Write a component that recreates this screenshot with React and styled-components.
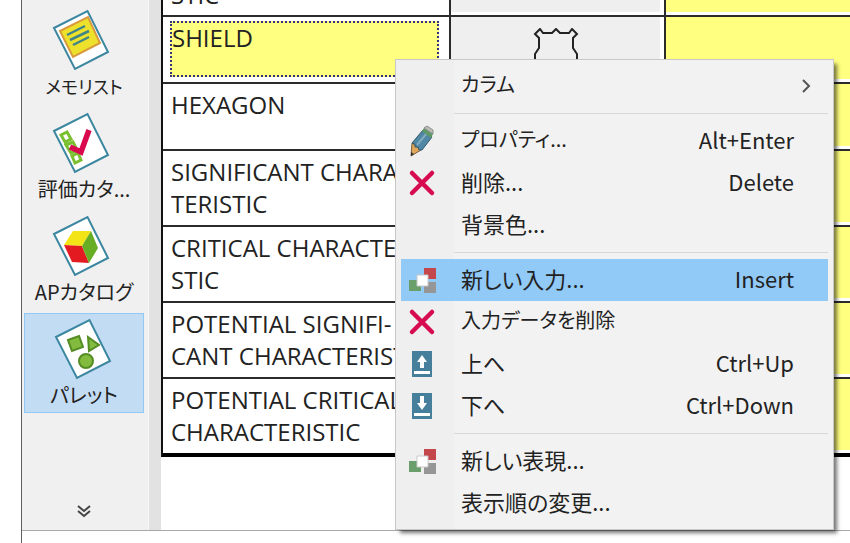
import React, { useState } from "react";
import styled, { createGlobalStyle } from "styled-components";

const GlobalStyle = createGlobalStyle`
  * {
    box-sizing: border-box;
  }
  body {
    margin: 0;
    background: #ffffff;
    color: #222222;
    font-family: "Noto Sans CJK JP", sans-serif;
    font-size: 22px;
    font-feature-settings: "palt";
  }
  button {
    font: inherit;
    color: inherit;
    font-feature-settings: inherit;
    border: none;
    background: none;
    padding: 0;
  }
`;

const Page = styled.div`
  position: relative;
  height: 100vh;
  padding-left: 21px;
  overflow: hidden;
`;

const Frame = styled.div`
  display: flex;
  flex-direction: column;
  height: 100%;
  border-left: 1px solid #606060;
`;

const Body = styled.div`
  display: flex;
  flex: 1;
  min-height: 0;
`;

const StatusStrip = styled.footer`
  height: 13px;
  border-top: 1px solid #a8a8a8;
`;

const Sidebar = styled.nav`
  display: flex;
  flex-direction: column;
  gap: 3px;
  width: 127px;
  padding: 4px 4px 12px 2px;
  background: #f0f0f0;
  border-right: 1px solid #f8f8f8;
`;

const SidebarItem = styled.button`
  display: flex;
  flex-direction: column;
  align-items: center;
  height: 100px;
  padding-top: 4px;
  white-space: nowrap;
  line-height: 30px;
  background: ${(props) => (props.$active ? "#c2dcf3" : "transparent")};
  border: 1px solid ${(props) => (props.$active ? "#90c8f6" : "transparent")};
`;

const SidebarIcon = styled.span`
  display: flex;
  padding-right: ${(props) => (props.$active ? "2px" : "6px")};
`;

const SidebarLabel = styled.span`
  font-size: ${(props) => (props.$small ? "18px" : "20px")};
`;

const MoreButton = styled.button`
  display: flex;
  justify-content: center;
  margin-top: auto;
`;

const Splitter = styled.div`
  width: 12px;
  background: #e2e2e2;
`;

const Pane = styled.main`
  flex: 1;
  min-width: 0;
  overflow: hidden;
`;

const Table = styled.table`
  width: 100%;
  table-layout: fixed;
  border-collapse: separate;
  border-spacing: 0;
  border-left: 2px solid #111111;
  border-bottom: 2px solid #000000;
  font-family: "Open Sans", "Noto Sans", sans-serif;
  font-size: 24px;
`;

const NameCol = styled.col`
  width: 288px;
`;

const SymbolCol = styled.col`
  width: 215px;
`;

const Cell = styled.td`
  height: ${(props) => props.$height}px;
  padding: 0;
  vertical-align: top;
  border-bottom: 2px solid #2b2b2b;
  border-right: 2px solid #2b2b2b;
  &:last-child {
    border-right: none;
  }
  tr:last-child > & {
    border-bottom-color: #000000;
  }
`;

const NameText = styled.div`
  margin: 4px 0 4px 7px;
  border: 1px solid transparent;
  line-height: 32px;
  white-space: pre;
  overflow: hidden;
`;

const ClippedText = styled.div`
  display: flex;
  align-items: flex-end;
  height: 15px;
  padding: 0 8px 4px;
  line-height: 32px;
`;

const SelectedText = styled(NameText)`
  height: 56px;
  margin-right: 10px;
  background: #ffff80;
  border: 2px dotted #34347c;
  line-height: 30px;
`;

const Fill = styled.div`
  display: flex;
  justify-content: center;
  height: ${(props) => props.$height - 5}px;
  margin-bottom: 3px;
  margin-right: ${(props) => (props.$yellow ? "0" : "4px")};
  padding-top: 11px;
  overflow: hidden;
  background: ${(props) => (props.$yellow ? "#ffff80" : "#efefef")};
`;

const Menu = styled.div`
  position: absolute;
  left: 395px;
  top: 59px;
  width: 439px;
  padding: 5px;
  border: 1px solid #c8c8c8;
  background: linear-gradient(to right, #efefef 58px, #f2f2f2 58px);
  box-shadow: 4px 4px 4px -1px rgba(0, 0, 0, 0.55);
`;

const MenuItem = styled.button`
  display: grid;
  grid-template-columns: 42px 1fr auto;
  align-items: center;
  column-gap: 18px;
  width: 100%;
  height: 42px;
  padding-right: 16px;
  text-align: left;
  line-height: 32px;
  background: ${(props) => (props.$active ? "#91c9f7" : "transparent")};
`;

const MenuIcon = styled.span`
  display: flex;
  justify-content: center;
`;

const MenuLabel = styled.span`
  padding-bottom: 4px;
  white-space: nowrap;
  font-size: ${(props) => (props.$small ? "20px" : "22px")};
`;

const Shortcut = styled.span`
  padding: 0 18px 4px 0;
`;

const Submenu = styled.span`
  display: flex;
`;

const Separator = styled.hr`
  height: 1px;
  margin: 6px 0 6px 53px;
  border: none;
  background: #d7d7d7;
`;

const Sheet = ({ children }) => (
  <svg width="58" height="62" viewBox="0 0 58 62">
    <path d="M2 19 35.500 2 56 43 23 60Z" fill="#fff" stroke="#3c87a0" strokeWidth="2" />
    {children}
  </svg>
);

const MemoIcon = () => (
  <Sheet>
    <path d="M8 22 36 8 48 34 21 48Z" fill="#eee12c" stroke="#d9993d" strokeWidth="2" />
    <path d="M15 26 33 17M18 31 37 22M21 36 37 28" stroke="#3f8587" strokeWidth="2.500" />
  </Sheet>
);

const RatingIcon = () => (
  <Sheet>
    <path
      d="M9 23 15 20 19 27 13 30ZM14 33 21 30 25 38 19 41ZM20 44 26 41 29 48 23 51Z"
      fill="#fff"
      stroke="#7abf2f"
      strokeWidth="3"
    />
    <path d="M18 35 29 40 37 18" fill="none" stroke="#d8094f" strokeWidth="5.500" />
  </Sheet>
);

const CubeIcon = () => (
  <Sheet>
    <path d="M12 30 21 16 39 16 30 31Z" fill="#f3e417" />
    <path d="M12 30 30 31 37 48 20 47Z" fill="#e31b21" />
    <path d="M39 16 46 33 37 48 30 31Z" fill="#67ae24" />
  </Sheet>
);

const PaletteIcon = () => (
  <Sheet>
    <g fill="#82bb3d" stroke="#558d25" strokeWidth="2">
      <path d="M14 22 25 18 29 29 18 33Z" />
      <path d="M34 19 45 27 35 33Z" />
      <circle cx="32" cy="43" r="7" />
    </g>
  </Sheet>
);

const PencilIcon = () => (
  <svg width="26" height="32" viewBox="0 0 26 32">
    <path d="M3 18 12 25 2 31Z" fill="#dfa65a" stroke="#76603d" strokeWidth="1" />
    <path d="M2 31 2 27 5 29Z" fill="#333" />
    <path d="M3 18 14 5 23 12 13 25 10 25 9 22 6 22 6 19Z" fill="#4f87a5" stroke="#35596c" />
    <path d="M8 20 18 8" stroke="#82abc0" strokeWidth="2" />
    <path d="M13 6 15 3 24 9 22 13Z" fill="#5d9865" />
    <path d="M15 3 18 1 24 5 24 9Z" fill="#bcbdb8" stroke="#8b8e88" />
  </svg>
);

const DeleteIcon = () => (
  <svg width="28" height="28" viewBox="0 0 28 28">
    <path
      d="M4 4 24 24M24 4 4 24"
      stroke="#d60b50"
      strokeWidth="4.500"
      strokeLinecap="round"
    />
  </svg>
);

const NewIcon = () => (
  <svg width="28" height="28" viewBox="0 0 28 28">
    <path d="M16 2H28V13H16Z" fill="#c4484b" />
    <path d="M1 14H13V25H1Z" fill="#6a9e6b" />
    <path d="M16 16H28V27H16Z" fill="#969696" />
    <path d="M9 9H20V20H9Z" fill="#fff" stroke="#c9c9c9" strokeWidth="1" />
  </svg>
);

const MoveIcon = ({ down }) => (
  <svg width="20" height="26" viewBox="0 0 20 26">
    <path d="M0 0H20V26H0Z" fill="#467f9c" />
    <path
      d={down ? "M8 3H12V10H15L10 17 5 10H8Z" : "M10 4 15 11H12V17H8V11H5Z"}
      fill="#fff"
    />
    <path d="M2 20H18V23H2Z" fill="#fff" />
  </svg>
);

const ChevronIcon = () => (
  <svg width="10" height="16" viewBox="0 0 10 16">
    <path d="M1 2 7 8 1 14" fill="none" stroke="#555" strokeWidth="2" />
  </svg>
);

const MoreIcon = () => (
  <svg width="16" height="14" viewBox="0 0 16 14">
    <path d="M2 2 8 7 14 2M2 7 8 12 14 7" fill="none" stroke="#444" strokeWidth="2" />
  </svg>
);

const ShieldShape = () => (
  <svg width="46" height="46" viewBox="0 0 46 46">
    <path
      d="M2 6 7 1 10 5H19L23 1 27 5H36L39 1 44 6 40 10V20L44 26V32Q42 41 23 45 4 41 2 32V26L6 20V10Z"
      fill="none"
      stroke="#222"
      strokeWidth="2"
    />
  </svg>
);

const sidebarItems = [
  { label: "メモリスト", icon: <MemoIcon />, small: true },
  { label: "評価カタ...", icon: <RatingIcon /> },
  { label: "APカタログ", icon: <CubeIcon /> },
  { label: "パレット", icon: <PaletteIcon /> },
];

const rows = [
  { text: "STIC", height: 17, clipped: true },
  { text: "SHIELD", height: 67, selected: true, symbol: <ShieldShape /> },
  { text: "HEXAGON", height: 67 },
  { text: "SIGNIFICANT CHARAC-\nTERISTIC", height: 76 },
  { text: "CRITICAL CHARACTERI-\nSTIC", height: 76 },
  { text: "POTENTIAL SIGNIFI-\nCANT CHARACTERISTIC", height: 76 },
  { text: "POTENTIAL CRITICAL\nCHARACTERISTIC", height: 76 },
];

const menuGroups = [
  [{ label: "カラム", submenu: true, small: true }],
  [
    { label: "プロパティ...", shortcut: "Alt+Enter", icon: <PencilIcon />, small: true },
    { label: "削除...", shortcut: "Delete", icon: <DeleteIcon /> },
    { label: "背景色..." },
  ],
  [
    { label: "新しい入力...", shortcut: "Insert", icon: <NewIcon /> },
    { label: "入力データを削除", icon: <DeleteIcon />, small: true },
    { label: "上へ", shortcut: "Ctrl+Up", icon: <MoveIcon /> },
    { label: "下へ", shortcut: "Ctrl+Down", icon: <MoveIcon down /> },
  ],
  [{ label: "新しい表現...", icon: <NewIcon /> }, { label: "表示順の変更..." }],
];

const NameCell = ({ row }) => {
  if (row.clipped) return <ClippedText>{row.text}</ClippedText>;
  if (row.selected) return <SelectedText>{row.text}</SelectedText>;
  return <NameText>{row.text}</NameText>;
};

const ContextMenu = () => {
  const [active, setActive] = useState("新しい入力...");
  return (
    <Menu role="menu">
      {menuGroups.map((group, index) => (
        <React.Fragment key={index}>
          {index > 0 && <Separator />}
          {group.map((item) => (
            <MenuItem
              key={item.label}
              role="menuitem"
              $active={active === item.label}
              onMouseEnter={() => setActive(item.label)}
            >
              <MenuIcon>{item.icon}</MenuIcon>
              <MenuLabel $small={item.small}>{item.label}</MenuLabel>
              {item.shortcut && <Shortcut>{item.shortcut}</Shortcut>}
              {item.submenu && (
                <Submenu>
                  <ChevronIcon />
                </Submenu>
              )}
            </MenuItem>
          ))}
        </React.Fragment>
      ))}
    </Menu>
  );
};

const App = () => {
  const [view, setView] = useState("パレット");
  return (
    <Page>
      <GlobalStyle />
      <Frame>
        <Body>
          <Sidebar>
            {sidebarItems.map((item) => (
              <SidebarItem
                key={item.label}
                $active={view === item.label}
                onClick={() => setView(item.label)}
              >
                <SidebarIcon $active={view === item.label}>{item.icon}</SidebarIcon>
                <SidebarLabel $small={item.small}>{item.label}</SidebarLabel>
              </SidebarItem>
            ))}
            <MoreButton aria-label="More">
              <MoreIcon />
            </MoreButton>
          </Sidebar>
          <Splitter />
          <Pane>
            <Table>
              <colgroup>
                <NameCol />
                <SymbolCol />
                <col />
              </colgroup>
              <tbody>
                {rows.map((row) => (
                  <tr key={row.text}>
                    <Cell $height={row.height}>
                      <NameCell row={row} />
                    </Cell>
                    <Cell $height={row.height}>
                      <Fill $height={row.height}>{row.symbol}</Fill>
                    </Cell>
                    <Cell $height={row.height}>
                      <Fill $height={row.height} $yellow />
                    </Cell>
                  </tr>
                ))}
              </tbody>
            </Table>
          </Pane>
        </Body>
        <StatusStrip />
      </Frame>
      <ContextMenu />
    </Page>
  );
};

export default App;
